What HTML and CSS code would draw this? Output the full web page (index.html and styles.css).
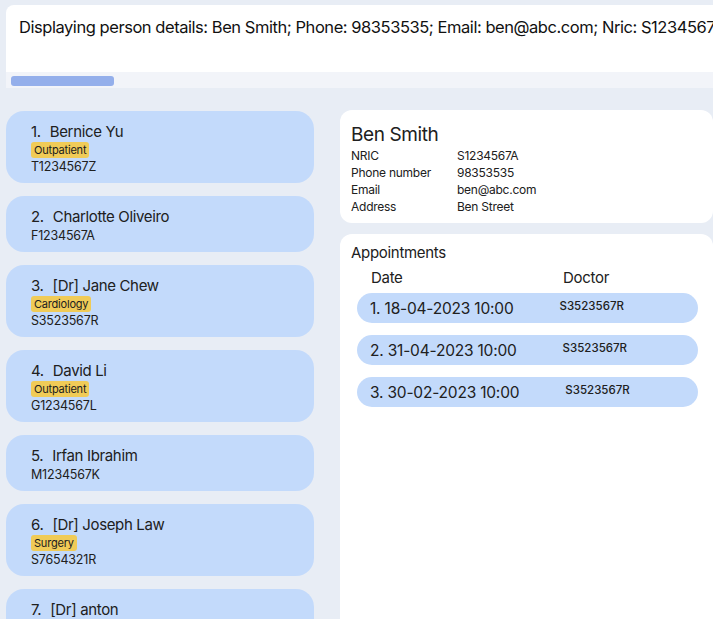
FILE: index.html
```html
<!DOCTYPE html>
<html>
<head>
<meta charset="utf-8">
<link rel="stylesheet" href="styles.css">
</head>
<body>
<div class="app">
  <div class="result-box">
    <div class="result-text">Displaying person details: Ben Smith; Phone: 98353535; Email: ben@abc.com; Nric: S1234567A</div>
  </div>
  <div class="scroll-track"><div class="scroll-thumb"></div></div>

  <div class="main">
    <div class="person-list">
      <div class="card">
        <div class="name"><span class="idx">1.</span><span>Bernice Yu</span></div>
        <div class="tags"><span class="tag">Outpatient</span></div>
        <div class="nric">T1234567Z</div>
      </div>
      <div class="card">
        <div class="name"><span class="idx">2.</span><span>Charlotte Oliveiro</span></div>
        <div class="nric">F1234567A</div>
      </div>
      <div class="card">
        <div class="name"><span class="idx">3.</span><span>[Dr] Jane Chew</span></div>
        <div class="tags"><span class="tag">Cardiology</span></div>
        <div class="nric">S3523567R</div>
      </div>
      <div class="card">
        <div class="name"><span class="idx">4.</span><span>David Li</span></div>
        <div class="tags"><span class="tag">Outpatient</span></div>
        <div class="nric">G1234567L</div>
      </div>
      <div class="card">
        <div class="name"><span class="idx">5.</span><span>Irfan Ibrahim</span></div>
        <div class="nric">M1234567K</div>
      </div>
      <div class="card">
        <div class="name"><span class="idx">6.</span><span>[Dr] Joseph Law</span></div>
        <div class="tags"><span class="tag">Surgery</span></div>
        <div class="nric">S7654321R</div>
      </div>
      <div class="card">
        <div class="name"><span class="idx">7.</span><span>[Dr] anton</span></div>
        <div class="nric">S1111111A</div>
      </div>
    </div>

    <div class="side">
      <div class="details">
        <div class="det-name">Ben Smith</div>
        <div class="det-grid">
          <span>NRIC</span><span>S1234567A</span>
          <span>Phone number</span><span>98353535</span>
          <span>Email</span><span>ben@abc.com</span>
          <span>Address</span><span>Ben Street</span>
        </div>
      </div>
      <div class="appts">
        <div class="appts-title">Appointments</div>
        <div class="appts-head"><span class="h-date">Date</span><span>Doctor</span></div>
        <div class="appt"><span class="a-date">1. 18-04-2023 10:00</span><span class="a-doc">S3523567R</span></div>
        <div class="appt"><span class="a-date">2. 31-04-2023 10:00</span><span class="a-doc">S3523567R</span></div>
        <div class="appt"><span class="a-date">3. 30-02-2023 10:00</span><span class="a-doc">S3523567R</span></div>
      </div>
    </div>
  </div>
</div>
</body>
</html>
```
FILE: styles.css
```css
html, body {
  margin: 0;
  padding: 0;
  height: 100%;
  overflow: hidden;
}
body {
  background: #e8edf5;
  font-family: Inter, "Noto Sans", sans-serif;
  color: #202020;
}
.app {
  padding: 5px 0 0 6px;
  width: 760px;
}
.result-box {
  background: #ffffff;
  height: 67px;
  border-radius: 8px 0 0 0;
  padding-left: 13px;
  overflow: hidden;
  white-space: nowrap;
}
.result-text {
  font-size: 16.5px;
  line-height: 20px;
  padding-top: 12px;
  color: #111;
  letter-spacing: -0.45px;
}
.scroll-track {
  background: #f2f4f9;
  height: 16px;
  padding: 4px 0 0 5px;
  box-sizing: border-box;
}
.scroll-thumb {
  width: 103px;
  height: 10px;
  border-radius: 3px;
  background: #94afeb;
}
.main {
  display: flex;
  margin-top: 22px;
}
.person-list {
  width: 308px;
  display: flex;
  flex-direction: column;
  gap: 13px;
  padding-top: 1px;
}
.card {
  background: #c3dafb;
  border-radius: 18px;
  padding: 10px 0 8px 25px;
}
.name {
  font-size: 15px;
  line-height: 21px;
  display: flex;
  gap: 9px;
  letter-spacing: -0.35px;
}
.tags {
  display: flex;
  height: 16px;
}
.tag {
  background: #f0cb57;
  border-radius: 3px;
  font-size: 11px;
  line-height: 16px;
  padding: 0 3px;
  letter-spacing: -0.2px;
}
.nric {
  font-size: 12.5px;
  line-height: 17px;
  letter-spacing: -0.2px;
}
.side {
  margin-left: 26px;
  width: 373px;
  display: flex;
  flex-direction: column;
  gap: 11px;
}
.details {
  background: #fff;
  border-radius: 12px;
  padding: 13px 0 8px 11px;
}
.det-name {
  font-size: 19px;
  line-height: 23px;
  letter-spacing: -0.4px;
}
.det-grid {
  display: grid;
  grid-template-columns: 106px auto;
  font-size: 12px;
  line-height: 17px;
  letter-spacing: -0.25px;
  margin-top: 1px;
}
.appts {
  background: #fff;
  border-radius: 12px 12px 0 0;
  padding: 9px 15px 0 11px;
  height: 420px;
}
.appts-title {
  font-size: 15px;
  line-height: 20px;
  letter-spacing: -0.3px;
}
.appts-head {
  display: flex;
  font-size: 15px;
  line-height: 20px;
  margin-top: 5px;
  padding-left: 20px;
  letter-spacing: -0.3px;
}
.h-date {
  width: 192px;
}
.appt {
  margin: 5px 0 12px 6px;
  height: 30px;
  border-radius: 15px;
  background: #c3dafb;
  display: flex;
  align-items: center;
  padding-left: 13px;
  gap: 46px;
}
.appt + .appt {
  margin-top: 0;
}
.a-date {
  font-size: 15.5px;
  letter-spacing: -0.2px;
}
.a-doc {
  font-size: 11.5px;
  font-weight: 500;
  margin-bottom: 4px;
}
```
